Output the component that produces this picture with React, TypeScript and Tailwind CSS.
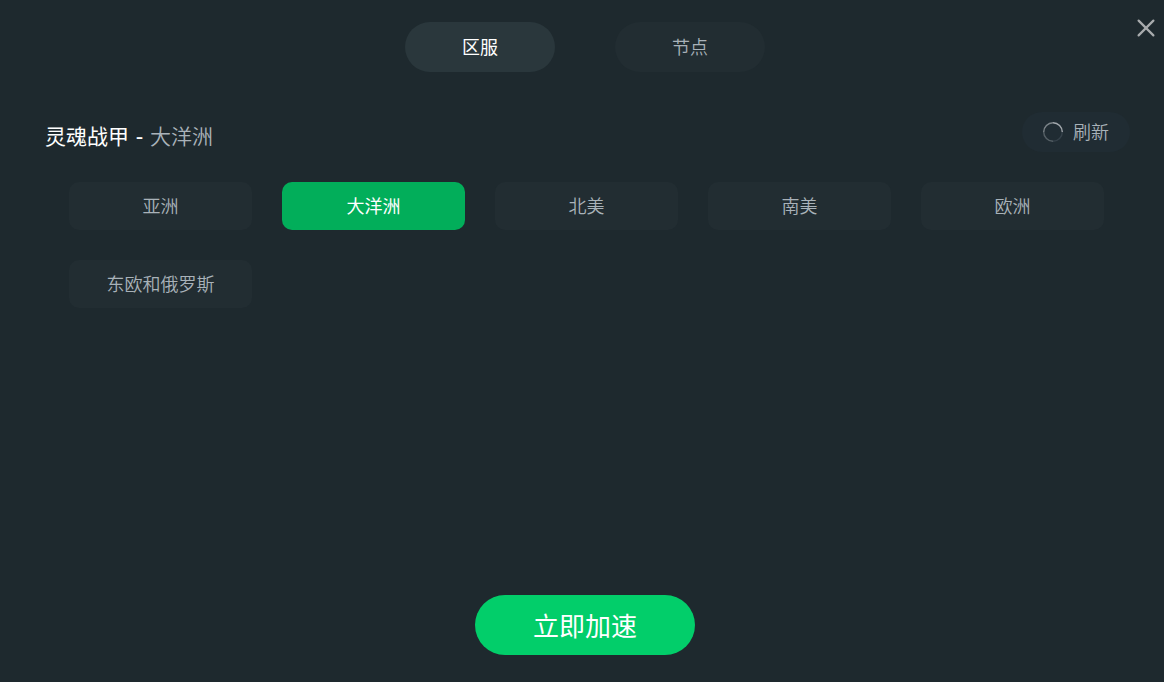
import { useState } from 'react'
import clsx from 'clsx'

const TABS = ['区服', '节点']
const REGIONS = ['亚洲', '大洋洲', '北美', '南美', '欧洲', '东欧和俄罗斯']

function CloseIcon() {
  return (
    <svg width="18" height="18" viewBox="0 0 18 18" fill="none" stroke="#a8abad" strokeWidth="2.2" strokeLinecap="round">
      <path d="M1.6 1.6l14.8 14.8M16.4 1.6L1.6 16.4" />
    </svg>
  )
}

function LoadingIcon() {
  return (
    <svg width="20" height="20" viewBox="0 0 20 20" fill="none" strokeWidth="1.4">
      <path d="M10 .7A9.3 9.3 0 0 1 19.3 10" stroke="#a3a9ae" />
      <path d="M10 .7A9.3 9.3 0 0 0 .7 10" stroke="#7c8489" />
      <path d="M.7 10A9.3 9.3 0 0 0 10 19.3" stroke="#566066" />
      <path d="M10 19.3A9.3 9.3 0 0 0 19.3 10" stroke="#35414a" />
    </svg>
  )
}

export default function App() {
  const [tab, setTab] = useState('区服')
  const [region, setRegion] = useState('大洋洲')

  return (
    <div className="relative flex h-screen flex-col overflow-hidden bg-[#1e292e] font-['Noto_Sans_CJK_SC',sans-serif] font-[350] text-[#a9b2b9]">
      {/* Tabs */}
      <div className="flex justify-center gap-[60px] pt-[22px] pl-[6px]">
        {TABS.map((name) => (
          <button
            key={name}
            onClick={() => setTab(name)}
            className={clsx(
              'h-[50px] w-[150px] rounded-full pb-0.5 text-lg leading-none',
              tab === name ? 'bg-[#2a373c] font-normal text-white' : 'bg-[#222d32]'
            )}
          >
            {name}
          </button>
        ))}
      </div>

      <button className="absolute top-[19px] right-[9px]" aria-label="关闭">
        <CloseIcon />
      </button>

      {/* Title row */}
      <div className="mt-10 flex h-10 items-start justify-between pr-[34px] pl-[45px]">
        <h1 className="flex pt-[13px] text-[21px] leading-[21px]">
          <span className="font-normal text-white">灵魂战甲</span>
          <span className="w-[21px] text-center font-medium text-white">-</span>
          <span>{region}</span>
        </h1>
        <button className="flex h-10 w-[108px] items-center gap-[10px] rounded-full bg-[#202c33] pl-[21px] text-lg leading-none">
          <LoadingIcon />
          <span className="pb-0.5">刷新</span>
        </button>
      </div>

      {/* Regions */}
      <div className="mt-[30px] grid grid-cols-[repeat(5,183px)] gap-[30px] pl-[69px]">
        {REGIONS.map((name) => (
          <button
            key={name}
            onClick={() => setRegion(name)}
            className={clsx(
              'h-12 rounded-[10px] pb-0.5 text-lg leading-none',
              region === name ? 'bg-[#02ae5a] font-normal text-white' : 'bg-[#222d32]'
            )}
          >
            {name}
          </button>
        ))}
      </div>

      <div className="mt-auto flex justify-center pb-[27px] pl-[6px]">
        <button className="h-[60px] w-[220px] rounded-full bg-[#02ce6a] text-[26px] leading-none font-normal text-white">
          立即加速
        </button>
      </div>
    </div>
  )
}
